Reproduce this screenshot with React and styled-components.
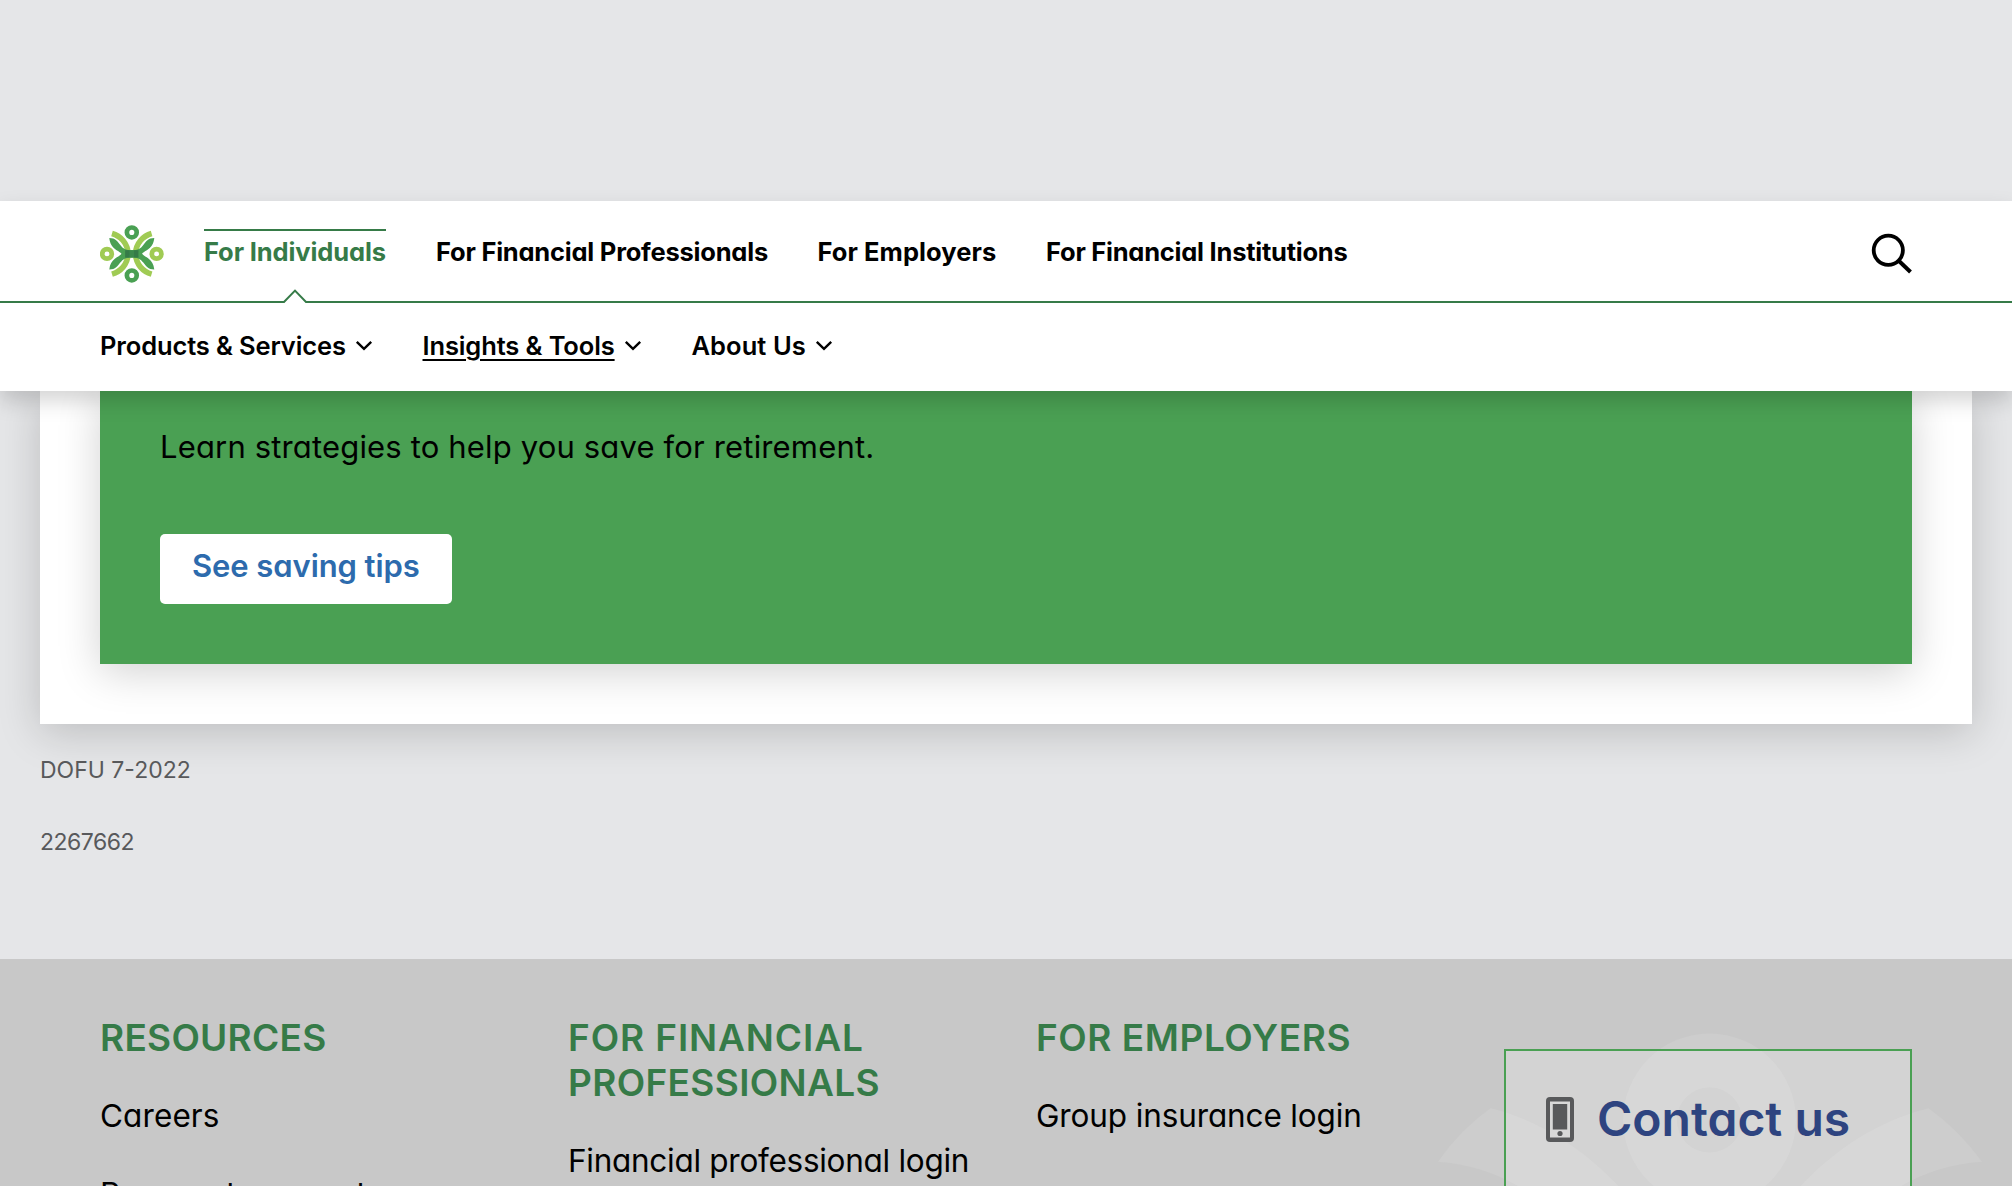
import React from "react";
import styled, { createGlobalStyle } from "styled-components";

const Global = createGlobalStyle`
  * { box-sizing: border-box; }
  html, body { margin: 0; padding: 0; }
  body {
    background: #e5e6e8;
    color: #000;
    font-family: Inter, Lato, "Liberation Sans", sans-serif;
    font-feature-settings: "cv11", "ss03";
    overflow: hidden;
  }
`;

const Page = styled.div`
  width: 100%;
  height: 1186px;
  padding-top: 201px;
  overflow: hidden;
  display: flex;
  flex-direction: column;
`;

const Header = styled.header`
  position: relative;
  z-index: 2;
  flex: none;
  height: 190px;
  background: #fff;
  box-shadow: 0 10px 20px rgba(0, 0, 0, 0.17);
`;

const PrimaryBar = styled.div`
  display: flex;
  height: 102px;
  padding: 0 100px;
  border-bottom: 2px solid #367b48;
`;

const Logo = styled.svg`
  flex: none;
  width: 64px;
  height: 58px;
  margin: 24px 40px 0 0;
`;

const PrimaryNav = styled.nav`
  display: flex;
  flex: 1;
  gap: 50px;
`;

const PrimaryLink = styled.a`
  position: relative;
  height: 100px;
  width: ${(p) => p.$w}px;
  line-height: 101px;
  font-size: 25.5px;
  font-weight: 700;
  letter-spacing: ${(p) => p.$ls || 0}px;
  white-space: nowrap;
  color: ${(p) => (p.$active ? "#367b48" : "#000")};
  &::before {
    content: "";
    display: ${(p) => (p.$active ? "block" : "none")};
    position: absolute;
    top: 28px;
    left: 0;
    right: 0;
    height: 2px;
    background: #367b48;
  }
`;

const Notch = styled.svg`
  position: absolute;
  left: 50%;
  bottom: -2px;
  width: 26px;
  height: 15px;
  margin-left: -13px;
`;

const SearchIcon = styled.svg`
  flex: none;
  width: 41px;
  height: 41px;
  margin-top: 32px;
`;

const SecondaryBar = styled.nav`
  display: flex;
  gap: 50px;
  height: 88px;
  padding: 0 100px;
`;

const MenuItem = styled.a`
  display: flex;
  align-items: center;
  gap: 9px;
  height: 85px;
`;

const MenuLabel = styled.span`
  width: ${(p) => p.$w}px;
  font-size: 25.5px;
  font-weight: 600;
  line-height: 40px;
  letter-spacing: ${(p) => p.$ls || 0}px;
  white-space: nowrap;
  text-decoration: ${(p) => (p.$active ? "underline" : "none")};
  text-decoration-thickness: 2px;
  text-underline-offset: 4px;
`;

const Chevron = styled.svg`
  width: 18px;
  height: 12px;
`;

const Card = styled.main`
  flex: none;
  height: 333px;
  margin: 0 40px;
  padding: 0 60px 60px;
  background: #fff;
  box-shadow: 0 8px 40px rgba(0, 0, 0, 0.18);
`;

const Promo = styled.section`
  height: 273px;
  padding: 36px 60px 0;
  background: #4aa053;
  box-shadow: 0 8px 40px rgba(0, 0, 0, 0.18);
`;

const PromoText = styled.p`
  width: max-content;
  margin: 0 0 67px;
  font-size: 31px;
  line-height: 40px;
  letter-spacing: 0.16px;
`;

const PromoButton = styled.button`
  display: flex;
  justify-content: flex-start;
  width: 292px;
  height: 70px;
  padding: 11px 0 0 32px;
  border: 0;
  border-radius: 5px;
  background: #fff;
  color: #2d6bad;
  font: inherit;
  font-size: 31px;
  font-weight: 600;
  line-height: 42px;
  letter-spacing: -0.08px;
  white-space: nowrap;
`;

const Disclosure = styled.div`
  flex: none;
  height: 235px;
  padding: 28px 40px 0;
  color: #58595b;
`;

const Code = styled.p`
  width: max-content;
  margin: 0 0 36px;
  font-size: 23px;
  line-height: 36px;
  letter-spacing: ${(p) => p.$ls || 0}px;
`;

const Footer = styled.footer`
  position: relative;
  display: flex;
  flex: none;
  height: 227px;
  padding: 56px 100px 0;
  overflow: hidden;
  background: #c8c8c8;
`;

const Watermark = styled.svg`
  position: absolute;
  top: 0;
  right: 0;
  width: 612px;
  height: 227px;
`;

const Column = styled.section`
  width: 468px;
`;

const Heading = styled.h2`
  width: max-content;
  margin: 0 0 36px;
  color: #367b48;
  font-size: 37px;
  font-weight: 600;
  line-height: 45px;
`;

const Line = styled.span`
  display: block;
  width: max-content;
  letter-spacing: ${(p) => p.$ls || 0}px;
`;

const FooterLink = styled.a`
  display: block;
  width: max-content;
  margin-bottom: 38px;
  font-size: 31.5px;
  line-height: 40px;
  letter-spacing: ${(p) => p.$ls || 0}px;
  white-space: nowrap;
`;

const Contact = styled.aside`
  position: relative;
  display: flex;
  width: 408px;
  height: 200px;
  margin-top: 34px;
  padding: 46px 0 0 40px;
  border: 2px solid #4aa053;
  background: rgba(255, 255, 255, 0.2);
`;

const PhoneIcon = styled.svg`
  flex: none;
  width: 28px;
  height: 45px;
`;

const ContactTitle = styled.h3`
  height: 60px;
  margin: -8px 0 0 23px;
  color: #2e4480;
  font-size: 48px;
  font-weight: 600;
  line-height: 60px;
  white-space: nowrap;
`;

function Chev() {
  return (
    <Chevron viewBox="0 0 18 12">
      <path d="M1.8 1.8 9 8.9l7.2-7.1" fill="none" stroke="#000" strokeWidth="2.4" />
    </Chevron>
  );
}

function CompanyLogo() {
  return (
    <Logo viewBox="0 0 64 58">
      <g fill="none" stroke="#a0cb54" strokeWidth="5.6">
        <path d="M12 8.500C20.500 11 27.500 18 28.200 28.800 27.500 39.600 20.500 46.600 12 49.100" />
        <path d="M51.600 8.500C43.100 11 36.100 18 35.400 28.800 36.100 39.600 43.100 46.600 51.600 49.100" />
        <circle cx="7" cy="28.900" r="4.800" strokeWidth="4.700" />
        <circle cx="56.600" cy="28.900" r="4.800" strokeWidth="4.700" />
      </g>
      <g fill="#4aa053">
        <path d="M9.300 13C10.500 24.500 18.500 25 21.500 28.800 23.500 31.500 26 32.400 31.800 32.400S40.100 31.500 42.100 28.800C45.100 25 53.100 24.500 54.300 13 48 13 46 16.500 43.300 20 40.500 23.800 38 25.200 31.800 25.200S23.100 23.800 20.300 20C17.600 16.500 15.600 13 9.300 13Z" />
        <path d="M9.300 44.600C10.500 33.100 18.500 32.600 21.500 28.800 23.500 26.100 26 25.200 31.800 25.200S40.100 26.100 42.100 28.800C45.100 32.600 53.100 33.100 54.300 44.600 48 44.600 46 41.100 43.300 37.600 40.500 33.800 38 32.400 31.800 32.400S23.100 33.800 20.300 37.600C17.600 41.100 15.600 44.600 9.300 44.600Z" />
      </g>
      <path d="M25.200 25.200h13.200c-.6 2.400-.6 4.800 0 7.200H25.200c.6-2.400.6-4.800 0-7.200Z" fill="#3c8a4c" />
      <path d="M25.200 25.200h4.300v7.200h-4.300ZM34.100 25.200h4.300v7.200h-4.300Z" fill="#367b48" />
      <g fill="none" stroke="#4aa053" strokeWidth="4.700">
        <circle cx="31.800" cy="7.400" r="4.900" />
        <circle cx="31.800" cy="50.400" r="4.900" />
      </g>
    </Logo>
  );
}

export default function App() {
  return (
    <>
      <Global />
      <Page>
        <Header>
          <PrimaryBar>
            <CompanyLogo />
            <PrimaryNav>
              <PrimaryLink $active $w={182} $ls={-0.12}>
                For Individuals
                <Notch viewBox="0 0 26 15">
                  <path d="M1.500 15 13 3l11.500 12Z" fill="#fff" />
                  <path d="M0 14h2L13 2.600 24 14h2" fill="none" stroke="#367b48" strokeWidth="2" />
                </Notch>
              </PrimaryLink>
              <PrimaryLink $w={331.5} $ls={-0.22}>For Financial Professionals</PrimaryLink>
              <PrimaryLink $w={178.5} $ls={0.06}>For Employers</PrimaryLink>
              <PrimaryLink $w={302} $ls={-0.24}>For Financial Institutions</PrimaryLink>
            </PrimaryNav>
            <SearchIcon viewBox="0 0 41 41">
              <circle cx="17.300" cy="17.300" r="14.600" fill="none" stroke="#000" strokeWidth="3.800" />
              <path d="m28 28 11.500 11" stroke="#000" strokeWidth="4" />
            </SearchIcon>
          </PrimaryBar>
          <SecondaryBar>
            <MenuItem><MenuLabel $w={245.5} $ls={-0.13}>Products &amp; Services</MenuLabel><Chev /></MenuItem>
            <MenuItem><MenuLabel $active $w={192} $ls={-0.12}>Insights &amp; Tools</MenuLabel><Chev /></MenuItem>
            <MenuItem><MenuLabel $w={114} $ls={0.06}>About Us</MenuLabel><Chev /></MenuItem>
          </SecondaryBar>
        </Header>
        <Card>
          <Promo>
            <PromoText>Learn strategies to help you save for retirement.</PromoText>
            <PromoButton>See saving tips</PromoButton>
          </Promo>
        </Card>
        <Disclosure>
          <Code>DOFU 7-2022</Code>
          <Code $ls={-0.5}>2267662</Code>
        </Disclosure>
        <Footer>
          <Watermark viewBox="1400 959 612 227">
            <g fill="#cdcdcd">
              <path fillRule="evenodd" d="M1623 1120a86.500 86.500 0 1 0 173 0 86.500 86.500 0 1 0-173 0ZM1677 1120a32.500 32.500 0 1 0 65 0 32.500 32.500 0 1 0-65 0Z" />
              <path d="M1490.500 1108.300C1540 1120 1585 1150 1619 1186.500V1190H1524C1500 1174 1470 1164 1438 1161.700Q1460 1130 1490.500 1108.300Z" />
              <path d="M1928.500 1108.300C1879 1120 1834 1150 1800 1186.500V1190H1895C1919 1174 1949 1164 1982 1161.700Q1959 1130 1928.500 1108.300Z" />
            </g>
          </Watermark>
          <Column>
            <Heading><Line $ls={0.27}>RESOURCES</Line></Heading>
            <FooterLink $ls={0.1}>Careers</FooterLink>
            <FooterLink $ls={0.75}>Payment support</FooterLink>
          </Column>
          <Column>
            <Heading>
              <Line $ls={0.9}>FOR FINANCIAL</Line>
              <Line $ls={0.35}>PROFESSIONALS</Line>
            </Heading>
            <FooterLink $ls={-0.28}>Financial professional login</FooterLink>
          </Column>
          <Column>
            <Heading><Line $ls={0.55}>FOR EMPLOYERS</Line></Heading>
            <FooterLink $ls={-0.13}>Group insurance login</FooterLink>
          </Column>
          <Contact>
            <PhoneIcon viewBox="0 0 28 45">
              <rect width="28" height="45" rx="4" fill="#58595b" />
              <rect x="4" y="4.500" width="20" height="36" fill="#d8d8d8" />
              <rect x="6.800" y="7" width="14.400" height="25.500" fill="#58595b" />
              <circle cx="14" cy="36.500" r="2.600" fill="#58595b" />
            </PhoneIcon>
            <ContactTitle>Contact us</ContactTitle>
          </Contact>
        </Footer>
      </Page>
    </>
  );
}
